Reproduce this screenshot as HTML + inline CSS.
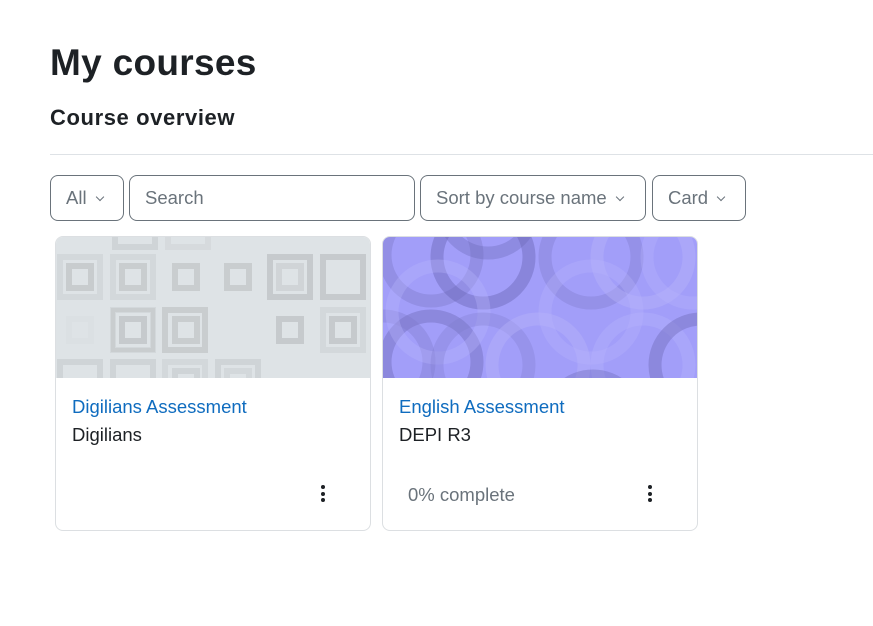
<!DOCTYPE html>
<html><head><meta charset="utf-8"><style>
*{box-sizing:border-box;margin:0;padding:0}
body{width:873px;height:626px;background:#fff;font-family:"Liberation Sans",Arial,sans-serif;color:#1d2125;position:relative;overflow:hidden}
h1{position:absolute;left:50px;top:42px;font-size:37px;font-weight:700;letter-spacing:0.3px}
h2{position:absolute;left:50px;top:105px;font-size:22px;font-weight:700;letter-spacing:0.6px}
.hr{position:absolute;left:50px;top:154px;width:823px;height:1px;background:#dee2e6}
.btn{position:absolute;top:175px;height:46px;border:1px solid #6a737b;border-radius:8px;font-size:18.5px;color:#6a737b;padding:0 15px;line-height:44px;white-space:nowrap}
.chev{display:inline-block;width:6px;height:6px;border-right:1.3px solid #6a737b;border-bottom:1.3px solid #6a737b;transform:rotate(45deg);position:relative;top:-4px;margin-left:10px}
.card{position:absolute;top:236px;width:316px;height:295px;border:1px solid #dcdfe2;border-radius:8px;overflow:hidden}
.img{height:141px;overflow:hidden}
.t{position:absolute;left:16px;top:159px;font-size:18.5px;color:#0f6cbf}
.s{position:absolute;left:16px;top:187px;font-size:18.5px;color:#1d2125}
.p{position:absolute;left:25px;top:247px;font-size:18.5px;color:#6a737b}
.dots{position:absolute;top:248px;width:4px}
.dots i{display:block;width:4px;height:4px;border-radius:2px;background:#1d2125;margin-bottom:2.5px}
</style></head><body>
<h1>My courses</h1>
<h2>Course overview</h2>
<div class="hr"></div>
<div class="btn" style="left:50px;width:74px">All<span class="chev"></span></div>
<div class="btn" style="left:129px;width:286px">Search</div>
<div class="btn" style="left:420px;width:226px">Sort by course name<span class="chev"></span></div>
<div class="btn" style="left:652px;width:94px">Card<span class="chev"></span></div>

<div class="card" style="left:55px">
<div class="img"><svg width="316" height="141" viewBox="0 0 316 141">
<rect width="316" height="141" fill="#dee3e6"/>
<g fill="none">
<rect x="59" y="-30" width="40" height="40" stroke="#cfd4d7" stroke-width="6"/>
<rect x="112" y="-30" width="40" height="40" stroke="#d6dadd" stroke-width="6"/>
<rect x="4" y="20" width="40" height="40" stroke="#d3d8db" stroke-width="6"/>
<rect x="13" y="29" width="22" height="22" stroke="#c8ccce" stroke-width="6"/>
<rect x="57" y="20" width="40" height="40" stroke="#d3d8db" stroke-width="6"/>
<rect x="66" y="29" width="22" height="22" stroke="#c9cdcf" stroke-width="6"/>
<rect x="119" y="29" width="22" height="22" stroke="#c9cdcf" stroke-width="6"/>
<rect x="171" y="29" width="22" height="22" stroke="#c9cdcf" stroke-width="6"/>
<rect x="214" y="20" width="40" height="40" stroke="#c6cacd" stroke-width="6"/>
<rect x="223" y="29" width="22" height="22" stroke="#d0d4d7" stroke-width="6"/>
<rect x="267" y="20" width="40" height="40" stroke="#c6cacd" stroke-width="6"/>
<rect x="13" y="82" width="22" height="22" stroke="#dbe0e3" stroke-width="6"/>
<rect x="57" y="73" width="40" height="40" stroke="#d3d8db" stroke-width="6"/>
<rect x="66" y="82" width="22" height="22" stroke="#c6cacd" stroke-width="6"/>
<rect x="57" y="73" width="40" height="40" stroke="#c9cdcf" stroke-width="4"/>
<rect x="109" y="73" width="40" height="40" stroke="#c9cdcf" stroke-width="6"/>
<rect x="119" y="82" width="22" height="22" stroke="#c9cdcf" stroke-width="6"/>
<rect x="223" y="82" width="22" height="22" stroke="#c6cacd" stroke-width="6"/>
<rect x="267" y="73" width="40" height="40" stroke="#d3d8db" stroke-width="6"/>
<rect x="276" y="82" width="22" height="22" stroke="#c6cacd" stroke-width="6"/>
<rect x="4" y="125" width="40" height="40" stroke="#cfd4d7" stroke-width="6"/>
<rect x="57" y="125" width="40" height="40" stroke="#cfd4d7" stroke-width="6"/>
<rect x="109" y="125" width="40" height="40" stroke="#d3d8db" stroke-width="6"/>
<rect x="119" y="134" width="22" height="22" stroke="#cfd4d7" stroke-width="6"/>
<rect x="162" y="125" width="40" height="40" stroke="#cfd4d7" stroke-width="6"/>
<rect x="171" y="134" width="22" height="22" stroke="#d3d8db" stroke-width="6"/>
</g></svg></div>
<div class="t">Digilians Assessment</div>
<div class="s">Digilians</div>
<div class="dots" style="left:265px"><i></i><i></i><i></i></div>
</div>

<div class="card" style="left:382px">
<div class="img"><svg width="316" height="141" viewBox="0 0 316 141">
<rect width="316" height="141" fill="#a29ef9"/>
<g fill="none" stroke-width="13">
<circle cx="48" cy="18" r="46" stroke="#7d79c9" stroke-opacity=".4"/>
<circle cx="100" cy="20" r="46" stroke="#6b67b5" stroke-opacity=".45"/>
<circle cx="105" cy="-30" r="46" stroke="#6b67b5" stroke-opacity=".35"/>
<circle cx="208" cy="20" r="46" stroke="#7d79c9" stroke-opacity=".35"/>
<circle cx="260" cy="20" r="46" stroke="#b8b5fb" stroke-opacity=".4"/>
<circle cx="48" cy="125" r="46" stroke="#6b67b5" stroke-opacity=".4"/>
<circle cx="0" cy="125" r="46" stroke="#7d79c9" stroke-opacity=".35"/>
<circle cx="55" cy="75" r="46" stroke="#b8b5fb" stroke-opacity=".35"/>
<circle cx="100" cy="128" r="46" stroke="#7d79c9" stroke-opacity=".3"/>
<circle cx="155" cy="128" r="46" stroke="#b8b5fb" stroke-opacity=".4"/>
<circle cx="208" cy="75" r="46" stroke="#b8b5fb" stroke-opacity=".3"/>
<circle cx="260" cy="128" r="46" stroke="#b8b5fb" stroke-opacity=".35"/>
<circle cx="210" cy="185" r="46" stroke="#6b67b5" stroke-opacity=".35"/>
<circle cx="318" cy="128" r="46" stroke="#6b67b5" stroke-opacity=".4"/>
<circle cx="310" cy="20" r="46" stroke="#b8b5fb" stroke-opacity=".3"/>
</g></svg></div>
<div class="t">English Assessment</div>
<div class="s">DEPI R3</div>
<div class="p">0% complete</div>
<div class="dots" style="left:265px"><i></i><i></i><i></i></div>
</div>
</body></html>
